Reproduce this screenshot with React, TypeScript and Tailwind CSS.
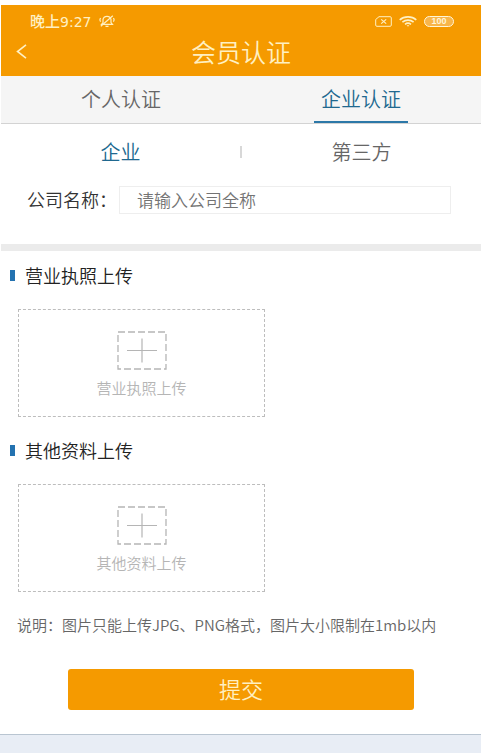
import { useState } from 'react';

const authTabs = ['个人认证', '企业认证'];
const companyTypes = ['企业', '第三方'];

function StatusBar() {
  return (
    <div className="flex h-8 items-center justify-between pl-[29px] pr-[27px] text-[#fff0c2]">
      <div className="flex items-center gap-2">
        <span className="text-[15px] leading-5 font-medium">
          晚上<span className="font-['DejaVu_Sans',sans-serif] text-sm">9:27</span>
        </span>
        <svg width="16" height="12" viewBox="0 0 16 12" fill="none" stroke="currentColor" strokeWidth="1.2">
          <path d="M2.500 9.400h11l-1.500-1.900V4.600C11.700 2.500 10 1.300 8 1.300S4.300 2.500 4 4.600v2.900z" />
          <path d="M6.500 10.900c.9.500 2.100.5 3 0M1.800 11.200 13.800.8M1.600 3C.8 4 .8 5.500 1.600 6.700M14.400 3c.8 1 .8 2.500 0 3.700" />
        </svg>
      </div>
      <div className="flex items-center gap-[7px]">
        <svg width="17" height="11" viewBox="0 0 17 11" fill="none" stroke="currentColor">
          <path d="M4 .7h11c.8 0 1.300.4 1.300 1v7.600c0 .6-.5 1-1.300 1H2C1.200 10.300.7 9.900.7 9.300V3.500z" />
          <path d="m6.200 3.400 5 4.200m0-4.200-5 4.200" strokeWidth="1.200" />
        </svg>
        <svg width="18" height="11" viewBox="0 0 18 11" fill="none" stroke="currentColor" strokeWidth="1.600">
          <path d="M.7 3.800C5.200-.1 12.800-.1 17.300 3.800M3.400 6.100c3.200-2.700 8-2.700 11.200 0M6 8.300c1.800-1.400 4.200-1.400 6 0" />
          <path d="M7.600 9.200h2.800L9 10.700z" fill="currentColor" stroke="none" />
        </svg>
        <span className="flex h-[11px] w-[30px] items-center justify-center rounded-full border border-current bg-[#f8b54a] pt-px font-['Liberation_Sans',sans-serif] text-[9px] leading-none font-bold text-[#fff6d8]">
          100
        </span>
      </div>
    </div>
  );
}

function UploadSection({ title }: { title: string }) {
  return (
    <section>
      <h2 className="flex h-12 items-center gap-[10px] pl-[9px] text-lg font-[350] text-[#222]">
        <span className="h-[11px] w-[5px] bg-[#2372b0]" />
        {title}
      </h2>
      <label className="mt-[10px] ml-[17px] flex h-[108px] w-[247px] cursor-pointer flex-col items-center border border-dashed border-[#bdbdbd] pt-[21px] text-[15px] leading-5 font-[350] text-[#b5b5b5]">
        <svg width="50" height="39" viewBox="0 0 50 39" fill="none" stroke="#b5b5b5">
          <rect x="1" y="1" width="48" height="37" strokeWidth="1.300" strokeDasharray="7 3" />
          <path d="M10 19.500h30M25 7.500v24" strokeWidth="1.200" />
        </svg>
        <span className="mt-2">{title}</span>
        <input type="file" accept="image/png,image/jpeg" className="hidden" />
      </label>
    </section>
  );
}

export default function App() {
  const [authTab, setAuthTab] = useState(1);
  const [companyType, setCompanyType] = useState(0);

  return (
    <div className="min-h-screen bg-[#e8edf5] font-['Noto_Sans_CJK_SC',sans-serif]">
      <div className="border-b border-[#b9c5d1] bg-white pt-[5px] pb-6 pl-px">
        {/* Header */}
        <header className="bg-[#f59a00]">
          <StatusBar />
          <div className="grid h-[39px] grid-cols-[48px_1fr_48px] items-center pb-3 text-[#fff0c2]">
            <button type="button" aria-label="返回" className="flex pt-[2px] pl-[15px]">
              <svg width="11" height="15" viewBox="0 0 11 15" fill="none" stroke="currentColor" strokeWidth="1.600">
                <path d="M10 .8 1.500 7.500 10 14.200" />
              </svg>
            </button>
            <h1 className="text-center text-[25px] leading-6 font-[350]">会员认证</h1>
          </div>
        </header>

        {/* Personal / company tabs */}
        <nav className="grid h-12 grid-cols-2 border-b border-[#d3d3d3] bg-[#f5f5f5]">
          {authTabs.map((tab, i) => (
            <button
              key={tab}
              type="button"
              onClick={() => setAuthTab(i)}
              className={`mx-auto w-[94px] border-b-2 text-xl font-[350] ${
                authTab === i ? 'border-[#2c78a8] text-[#20688f]' : 'border-transparent text-[#666]'
              }`}
            >
              {tab}
            </button>
          ))}
        </nav>

        <div className="grid h-14 grid-cols-[1fr_2px_1fr] items-center">
          {companyTypes.map((type, i) => (
            <button
              key={type}
              type="button"
              onClick={() => setCompanyType(i)}
              className={`text-xl font-[350] ${i === 1 ? 'order-3' : ''} ${
                companyType === i ? 'text-[#20688f]' : 'text-[#666]'
              }`}
            >
              {type}
            </button>
          ))}
          <span className="order-2 h-3 bg-[#d8d8d8]" />
        </div>

        {/* Company name */}
        <div className="flex h-16 items-start pt-[6px] pr-[30px] pl-[26px]">
          <label
            htmlFor="company"
            className="w-[92px] shrink-0 text-lg leading-[26px] font-[350] whitespace-nowrap text-[#333]"
          >
            公司名称：
          </label>
          <input
            id="company"
            type="text"
            placeholder="请输入公司全称"
            className="h-7 min-w-0 flex-1 border border-[#eee] px-[17px] pb-[2px] text-[17px] font-[350] text-[#333] outline-none placeholder:text-[#737373]"
          />
        </div>
        <div className="h-[7px] bg-[#ebebeb]" />

        <UploadSection title="营业执照上传" />
        <div className="h-[9px]" />
        <UploadSection title="其他资料上传" />

        <p className="mt-[22px] px-4 text-[15px] leading-[22px] font-[350] text-[#666]">
          说明：图片只能上传JPG、PNG格式，图片大小限制在1mb以内
        </p>

        <div className="px-[67px] pt-[33px]">
          <button
            type="button"
            className="h-[41px] w-full rounded-[3px] bg-[#f59a00] pb-[2px] text-[22px] font-[350] text-[#fff0c2]"
          >
            提交
          </button>
        </div>
      </div>
    </div>
  );
}
